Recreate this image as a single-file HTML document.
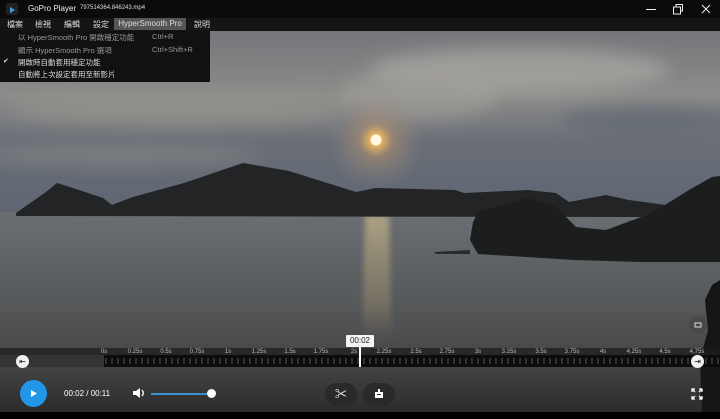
<!DOCTYPE html>
<html><head><meta charset="utf-8"><style>
*{margin:0;padding:0;box-sizing:border-box}
body{width:720px;height:419px;overflow:hidden;background:#000;font-family:"Liberation Sans","Noto Sans CJK TC",sans-serif;position:relative;color:#fff}
.abs{position:absolute}
#title{left:0;top:0;width:720px;height:18px;background:#0b0b0b}
#menu{left:0;top:18px;width:720px;height:13px;background:#151515;font-size:8px}
#menu span{position:absolute;top:1px;color:#ddd}
#drop{left:0;top:31px;width:210px;height:51px;background:#111;font-size:7.5px;color:#ddd;z-index:5}
#drop div{position:absolute;left:18px}
#drop i{position:absolute;left:152px;font-style:normal}
#video{left:0;top:31px;width:720px;height:381px;overflow:hidden}
.tl{font-size:6px;color:#bbb;position:absolute;top:349px;transform:translateX(-50%)}
</style></head><body>
<div id="title" class="abs">
 <div class="abs" style="left:6px;top:3px;width:12px;height:12px;background:#222;border-radius:2px"><svg width="12" height="12"><path d="M4 3 L9 6 L4 9Z" fill="#3aa0e0"/></svg></div>
 <div class="abs" style="left:28px;top:4px;font-size:8px;color:#eee">GoPro Player</div>
 <div class="abs" style="left:80px;top:5px;font-size:6px;color:#ddd">797514364.846243.mp4</div>
 <div class="abs" style="left:646px;top:9px;width:10px;height:1px;background:#eee"></div>
 <svg class="abs" style="left:672px;top:3px" width="12" height="12"><rect x="1.5" y="4" width="7" height="7" fill="none" stroke="#eee"/><path d="M4 4V1.5H10.5V8H8.5" fill="none" stroke="#eee"/></svg>
 <svg class="abs" style="left:701px;top:4px" width="10" height="10"><path d="M1 1L9 9M9 1L1 9" stroke="#eee"/></svg>
</div>
<div id="menu" class="abs">
 <span style="left:7px">檔案</span><span style="left:35px">檢視</span><span style="left:64px">編輯</span><span style="left:93px">設定</span>
 <span style="left:114px;top:0;width:72px;height:12px;background:#555;color:#ddd;text-align:center;padding-top:1px">HyperSmooth Pro</span>
 <span style="left:194px">說明</span>
</div>
<div id="drop" class="abs">
 <div style="top:1px;color:#999">以 HyperSmooth Pro 開啟穩定功能</div><i style="top:1px;color:#999">Ctrl+R</i>
 <div style="top:14px;color:#999">顯示 HyperSmooth Pro 選項</div><i style="top:14px;color:#999">Ctrl+Shift+R</i>
 <span style="position:absolute;left:3px;top:26px;font-size:7px">✔</span>
 <div style="top:26px">開啟時自動套用穩定功能</div>
 <div style="top:38px">自動將上次設定套用至新影片</div>
</div>
<div id="video" class="abs">
<svg width="720" height="381" viewBox="0 31 720 381">
<defs>
<linearGradient id="sky" x1="0" y1="31" x2="0" y2="215" gradientUnits="userSpaceOnUse"><stop offset="0" stop-color="#74767a"/><stop offset=".35" stop-color="#8c8c8a"/><stop offset=".6" stop-color="#6a6e76"/><stop offset="1" stop-color="#5e6672"/></linearGradient>
<radialGradient id="sun" cx="376" cy="140" r="50" gradientUnits="userSpaceOnUse"><stop offset="0" stop-color="#fff6d0"/><stop offset=".1" stop-color="#f0b860"/><stop offset=".35" stop-color="#b09070" stop-opacity=".55"/><stop offset="1" stop-color="#888" stop-opacity="0"/></radialGradient>
<linearGradient id="water" x1="0" y1="215" x2="0" y2="412" gradientUnits="userSpaceOnUse"><stop offset="0" stop-color="#6a6e72"/><stop offset=".45" stop-color="#56585a"/><stop offset=".75" stop-color="#444546"/><stop offset="1" stop-color="#2c2c2c"/></linearGradient>
<linearGradient id="refl" x1="0" y1="0" x2="0" y2="1"><stop offset="0" stop-color="#c8b88a" stop-opacity=".7"/><stop offset=".7" stop-color="#a89870" stop-opacity=".35"/><stop offset="1" stop-color="#807060" stop-opacity="0"/></linearGradient>
<filter id="bl"><feGaussianBlur stdDeviation="8"/></filter>
<filter id="bl2"><feGaussianBlur stdDeviation="3"/></filter>
</defs>
<rect x="0" y="31" width="720" height="185" fill="url(#sky)"/>
<g filter="url(#bl)">
<ellipse cx="520" cy="70" rx="150" ry="22" fill="#a8a8a4" opacity=".7"/>
<ellipse cx="180" cy="110" rx="170" ry="16" fill="#9a9690" opacity=".6"/>
<ellipse cx="420" cy="95" rx="80" ry="25" fill="#a4a09a" opacity=".6"/>
<ellipse cx="650" cy="120" rx="90" ry="14" fill="#5a6270" opacity=".6"/>
<ellipse cx="120" cy="155" rx="140" ry="12" fill="#8a8a88" opacity=".5"/>
</g>
<rect x="0" y="31" width="720" height="185" fill="url(#sun)"/>
<circle cx="376" cy="140" r="5.5" fill="#fff8e0"/>
<rect x="0" y="212" width="720" height="200" fill="url(#water)"/>
<path d="M365 215 L389 215 L392 345 L362 345Z" fill="url(#refl)" filter="url(#bl2)"/>
<path d="M16 213 L46 192 L57 183 L73 188 L103 198 L112 205 L133 197 L184 183 L243 163 L289 171 L356 192 L376 188 L455 190 L464 193 L528 190 L556 193 L569 202 L606 195 L629 200 L666 205 L657 215 L640 217 L16 216Z" fill="#222426"/>
<path d="M473 222 L478 212 L491 208 L528 198 L556 207 L576 227 L606 230 L652 213 L689 190 L712 177 L720 176 L720 262 L640 262 L574 260 L478 254 L470 240Z" fill="#1c1e1e"/>
<path d="M434 252 L470 250 L470 254 L436 254Z" fill="#2a2c2c"/>
<path d="M720 280 L712 285 L705 300 L708 330 L700 360 L702 412 L720 412Z" fill="#151616"/>
</svg>
</div>
<!-- timeline -->
<div class="abs" style="left:0;top:348px;width:720px;height:7px;background:rgba(30,30,30,.75)"></div>
<div class="abs" style="left:0;top:355px;width:104px;height:12px;background:rgba(40,40,40,.6)"></div>
<div class="abs" style="left:104px;top:355px;width:616px;height:12px;background:#0c0c0c"></div>
<svg class="abs" style="left:104px;top:355px" width="616" height="12">
<g stroke="#777" stroke-width=".7">
<path d="M2 3v6M8 3v6M14 3v6M20 3v6M26 3v6M32 3v6M38 3v6M44 3v6M50 3v6M56 3v6M62 3v6M68 3v6M74 3v6M80 3v6M86 3v6M92 3v6M98 3v6M104 3v6M110 3v6M116 3v6M122 3v6M128 3v6M134 3v6M140 3v6M146 3v6M152 3v6M158 3v6M164 3v6M170 3v6M176 3v6M182 3v6M188 3v6M194 3v6M200 3v6M206 3v6M212 3v6M218 3v6M224 3v6M230 3v6M236 3v6M242 3v6M248 3v6M254 3v6M260 3v6M266 3v6M272 3v6M278 3v6M284 3v6M290 3v6M296 3v6M302 3v6M308 3v6M314 3v6M320 3v6M326 3v6M332 3v6M338 3v6M344 3v6M350 3v6M356 3v6M362 3v6M368 3v6M374 3v6M380 3v6M386 3v6M392 3v6M398 3v6M404 3v6M410 3v6M416 3v6M422 3v6M428 3v6M434 3v6M440 3v6M446 3v6M452 3v6M458 3v6M464 3v6M470 3v6M476 3v6M482 3v6M488 3v6M494 3v6M500 3v6M506 3v6M512 3v6M518 3v6M524 3v6M530 3v6M536 3v6M542 3v6M548 3v6M554 3v6M560 3v6M566 3v6M572 3v6M578 3v6M584 3v6M590 3v6M596 3v6M602 3v6M608 3v6M614 3v6"/>
</g></svg>
<span class="tl" style="left:104px">0s</span><span class="tl" style="left:135px">0.25s</span><span class="tl" style="left:166px">0.5s</span><span class="tl" style="left:197px">0.75s</span><span class="tl" style="left:228px">1s</span><span class="tl" style="left:259px">1.25s</span><span class="tl" style="left:290px">1.5s</span><span class="tl" style="left:321px">1.75s</span><span class="tl" style="left:354px">2s</span><span class="tl" style="left:384px">2.25s</span><span class="tl" style="left:416px">2.5s</span><span class="tl" style="left:447px">2.75s</span><span class="tl" style="left:478px">3s</span><span class="tl" style="left:509px">3.25s</span><span class="tl" style="left:541px">3.5s</span><span class="tl" style="left:572px">3.75s</span><span class="tl" style="left:603px">4s</span><span class="tl" style="left:634px">4.25s</span><span class="tl" style="left:665px">4.5s</span><span class="tl" style="left:697px">4.75s</span>
<div class="abs" style="left:346px;top:335px;width:28px;height:12px;background:#f4f4f4;color:#222;font-size:8px;text-align:center;line-height:12px;border-radius:1px">00:02</div>
<div class="abs" style="left:359px;top:347px;width:2px;height:20px;background:#fff"></div>
<div class="abs" style="left:16px;top:355px;width:13px;height:13px;border-radius:50%;background:#f2f2f2;color:#111;font-size:8px;line-height:13px;text-align:center">⇤</div>
<div class="abs" style="left:691px;top:355px;width:13px;height:13px;border-radius:50%;background:#f2f2f2;color:#111;font-size:8px;line-height:13px;text-align:center">⇥</div>
<!-- controls -->
<div class="abs" style="left:20px;top:380px;width:27px;height:27px;border-radius:50%;background:#2196e8"></div>
<svg class="abs" style="left:20px;top:380px" width="27" height="27"><path d="M11 10L17 13.5L11 17Z" fill="#fff"/></svg>
<div class="abs" style="left:64px;top:389px;font-size:8px;color:#fff">00:02 / 00:11</div>
<svg class="abs" style="left:131px;top:386px" width="16" height="14"><path d="M2 5H5L9 2V12L5 9H2Z" fill="#fff"/><path d="M11 4Q13.5 7 11 10" stroke="#fff" fill="none" stroke-width="1.3"/></svg>
<div class="abs" style="left:151px;top:393px;width:61px;height:2px;background:#3a8fd0"></div>
<div class="abs" style="left:207px;top:389px;width:9px;height:9px;border-radius:50%;background:#fff"></div>
<div class="abs" style="left:325px;top:383px;width:32px;height:22px;border-radius:11px;background:rgba(40,40,40,.85);color:#fff;font-size:12px;text-align:center;line-height:22px">✂</div>
<div class="abs" style="left:363px;top:383px;width:32px;height:22px;border-radius:11px;background:rgba(40,40,40,.85)"></div>
<svg class="abs" style="left:373px;top:387px" width="12" height="14"><rect x="2" y="5" width="8" height="6" fill="#fff"/><rect x="5" y="2" width="2" height="3" fill="#fff"/><rect x="4" y="7" width="4" height="1" fill="#333"/></svg>
<svg class="abs" style="left:691px;top:388px" width="12" height="12" stroke="#fff" stroke-width="1.3" fill="none"><path d="M1 4V1H4M1 1L4 4M8 1H11V4M11 1L8 4M1 8V11H4M1 11L4 8M11 8V11H8M11 11L8 8"/></svg>
<div class="abs" style="left:689px;top:316px;width:18px;height:18px;border-radius:50%;background:rgba(70,70,70,.7)"></div>
<svg class="abs" style="left:693px;top:320px" width="10" height="10"><rect x="2" y="3" width="6" height="4" fill="none" stroke="#ddd"/></svg>
<div class="abs" style="left:0;top:412px;width:720px;height:7px;background:#000"></div>
</body></html>
